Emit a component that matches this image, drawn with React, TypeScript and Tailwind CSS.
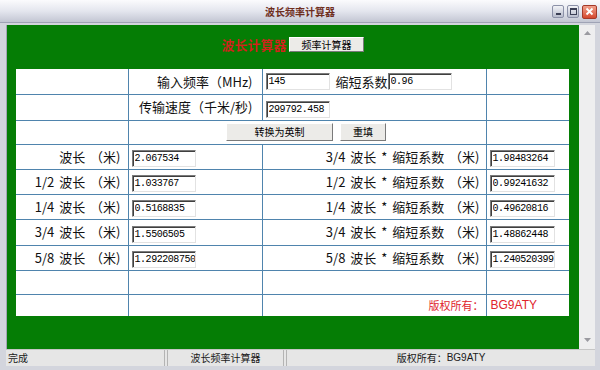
import React from "react";

type Row = {
  left: string;
  leftValue: string;
  right: string;
  rightValue: string;
};

const rows: Row[] = [
  { left: "波长", leftValue: "2.067534", right: "3/4 波长 * 缩短系数", rightValue: "1.98483264" },
  { left: "1/2 波长", leftValue: "1.033767", right: "1/2 波长 * 缩短系数", rightValue: "0.99241632" },
  { left: "1/4 波长", leftValue: "0.5168835", right: "1/4 波长 * 缩短系数", rightValue: "0.49620816" },
  { left: "3/4 波长", leftValue: "1.5506505", right: "3/4 波长 * 缩短系数", rightValue: "1.48862448" },
  { left: "5/8 波长", leftValue: "1.292208750", right: "5/8 波长 * 缩短系数", rightValue: "1.240520399" },
];

const cjk = "font-['Noto_Sans_CJK_SC',sans-serif]";
const cell = "border border-[#4f84ad] p-0";

const Field: React.FC<{ value: string; width?: string }> = ({ value, width = "w-[64px]" }) => (
  <input
    readOnly
    value={value}
    className={`${width} h-[17px] border border-t-[#7b7b7b] border-l-[#7b7b7b] border-r-[#e2e2e2] border-b-[#e2e2e2] bg-white pl-[2px] font-['Liberation_Mono',monospace] text-[10px] tracking-[-0.45px] text-black shadow-[inset_1px_1px_0_#3f3f3f] outline-none`}
  />
);

const RaisedButton: React.FC<{ label: string; className: string }> = ({ label, className }) => (
  <button
    type="button"
    className={`${className} border border-t-white border-l-white border-r-[#7a7a7a] border-b-[#7a7a7a] bg-[#ecebe8] text-[10px] leading-none text-black ${cjk}`}
  >
    {label}
  </button>
);

const App: React.FC = () => {
  return (
    <div className={`flex h-[370px] w-[600px] flex-col overflow-hidden bg-[#d3d5dd] ${cjk}`}>
      {/* title bar */}
      <div className="grid h-[22px] grid-cols-[1fr_auto_1fr] items-center bg-gradient-to-b from-[#fbfbfd] via-[#e4e6ee] to-[#c3c6d3]">
        <div />
        <div className="pt-[1px] text-[10px] font-bold text-[#6e2e1e]">波长频率计算器</div>
        <div className="flex justify-end gap-[3px] pr-[3px] pt-[1px]">
          <div className="flex h-[13px] w-[12px] items-end justify-center rounded-[2px] border border-[#8c91a8] bg-gradient-to-b from-[#f2f3f7] to-[#b9bdcd] pb-[2px]">
            <div className="h-[2px] w-[5px] bg-[#3b3f55]" />
          </div>
          <div className="flex h-[13px] w-[12px] items-center justify-center rounded-[2px] border border-[#8c91a8] bg-gradient-to-b from-[#f2f3f7] to-[#b9bdcd]">
            <div className="h-[7px] w-[7px] border border-t-2 border-[#3b3f55]" />
          </div>
          <div className="flex h-[14px] w-[15px] items-center justify-center rounded-[2px] border border-[#a33a2a] bg-gradient-to-b from-[#f0a08c] to-[#d4462c]">
            <svg width="9" height="9" viewBox="0 0 9 9">
              <path d="M1.5 1.5 L7.5 7.5 M7.5 1.5 L1.5 7.5" stroke="white" strokeWidth="1.8" />
            </svg>
          </div>
        </div>
      </div>

      {/* client area */}
      <div className="flex flex-1 flex-col border-t border-[#9fa3b5] pb-[4px] pl-[6px] pr-[5px] pt-[2px]">
        <div className="flex h-[324px] border-l border-[#a3a6b4]">
          <div className="w-[572px] bg-[#057d05] pt-[12px]">
            <div className="flex h-[15px] items-center justify-center">
              <span className="mr-[2px] text-[13px] font-bold leading-none text-[#d4241a] blur-[0.4px]">波长计算器</span>
              <RaisedButton label="频率计算器" className="h-[15px] w-[75px]" />
            </div>

            <table className="ml-[9px] mt-[17px] w-[553px] table-fixed border-collapse border-hidden bg-white text-[13px] text-[#111] [word-spacing:2px]">
              <colgroup>
                <col className="w-[112px]" />
                <col className="w-[134px]" />
                <col className="w-[224px]" />
                <col className="w-[83px]" />
              </colgroup>
              <tbody>
                <tr className="h-[25px]">
                  <td className={cell} />
                  <td className={`${cell} pr-[9px] text-right`}>输入频率（MHz)</td>
                  <td className={`${cell} pl-[3px]`}>
                    <div className="flex items-center">
                      <Field value="145" />
                      <span className="ml-[6px] text-[13px]">缩短系数</span>
                      <Field value="0.96" />
                    </div>
                  </td>
                  <td className={cell} />
                </tr>
                <tr className="h-[26px]">
                  <td className={cell} />
                  <td className={`${cell} pr-[9px] text-right`}>传输速度（千米/秒)</td>
                  <td className={`${cell} pl-[3px]`}>
                    <Field value="299792.458" />
                  </td>
                  <td className={cell} />
                </tr>
                <tr className="h-[24px]">
                  <td className={cell} />
                  <td className={cell} colSpan={2}>
                    <div className="flex justify-center gap-[7px] pr-[2px] [word-spacing:0]">
                      <RaisedButton label="转换为英制" className="h-[18px] w-[107px]" />
                      <RaisedButton label="重填" className="h-[18px] w-[46px]" />
                    </div>
                  </td>
                  <td className={cell} />
                </tr>
                {rows.map((r, i) => (
                  <tr key={i} className={i === 3 ? "h-[26px]" : "h-[25px]"}>
                    <td className={`${cell} whitespace-nowrap pr-[7px] text-right`}>
                      {r.left} （米)
                    </td>
                    <td className={`${cell} pl-[3px]`}>
                      <Field value={r.leftValue} />
                    </td>
                    <td className={`${cell} whitespace-nowrap pr-[6px] text-right`}>
                      {r.right} （米)
                    </td>
                    <td className={`${cell} pl-[3px]`}>
                      <Field value={r.rightValue} width="w-[65px]" />
                    </td>
                  </tr>
                ))}
                <tr className="h-[24px]">
                  <td className={cell} />
                  <td className={cell} />
                  <td className={cell} />
                  <td className={cell} />
                </tr>
                <tr className="h-[22px]">
                  <td className={cell} />
                  <td className={cell} />
                  <td className={`${cell} pr-[2px] text-right text-[11px] text-[#e0242c]`}>版权所有：</td>
                  <td className={`${cell} pl-[4px] font-['Liberation_Sans',sans-serif] text-[12px] text-[#e0242c]`}>BG9ATY</td>
                </tr>
              </tbody>
            </table>
          </div>

          {/* scrollbar */}
          <div className="flex w-[16px] flex-col items-center justify-between bg-[#eeeeef] pb-[7px] pt-[6px]">
            <svg width="7" height="4" viewBox="0 0 7 4">
              <path d="M0 4 L3.5 0 L7 4 Z" fill="#9a9aa0" />
            </svg>
            <svg width="7" height="4" viewBox="0 0 7 4">
              <path d="M0 0 L3.5 4 L7 0 Z" fill="#9a9aa0" />
            </svg>
          </div>
        </div>

        {/* status bar */}
        <div className="flex h-[17px] border-t border-[#c6c6c6] bg-[#e6e6e6] text-[10px] leading-none text-[#1a1a1a]">
          <div className="flex w-[159px] items-center border-r border-[#b4b4b4] pl-[2px]">完成</div>
          <div className="ml-[2px] flex w-[117px] items-center justify-center border-x border-[#b4b4b4]">波长频率计算器</div>
          <div className="ml-[2px] flex flex-1 items-center justify-center border-l border-[#b4b4b4]">
            版权所有：<span className="font-['Liberation_Sans',sans-serif]">BG9ATY</span>
          </div>
        </div>
      </div>
    </div>
  );
};

export default App;
